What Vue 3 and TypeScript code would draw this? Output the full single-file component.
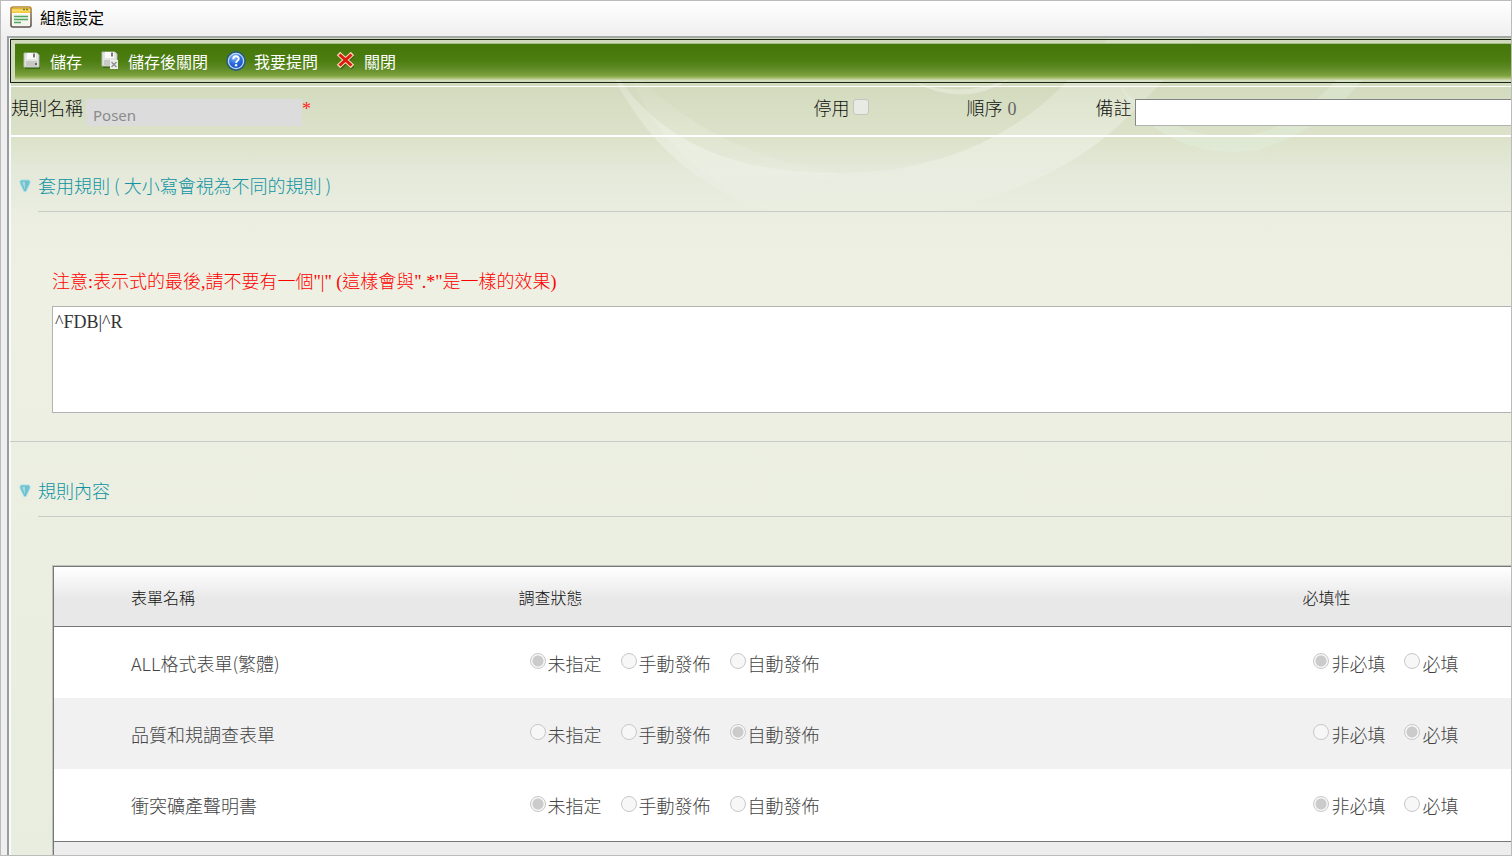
<script setup lang="ts">
import { ref } from 'vue'

interface FormRow {
  name: string
  status: string
  required: string
}

const statusOptions = ['未指定', '手動發佈', '自動發佈']
const requiredOptions = ['非必填', '必填']

const ruleName = ref('Posen')
const disabledFlag = ref(false)
const remark = ref('')
const expression = ref('^FDB|^R')

const rows = ref<FormRow[]>([
  { name: 'ALL格式表單(繁體)', status: '未指定', required: '非必填' },
  { name: '品質和規調查表單', status: '自動發佈', required: '必填' },
  { name: '衝突礦產聲明書', status: '未指定', required: '非必填' },
])
</script>

<template>
  <div class="window">
    <header class="titlebar">
      <svg class="title-icon" viewBox="0 0 22 22" aria-hidden="true">
        <defs>
          <linearGradient id="iconTop" x1="0" y1="0" x2="0" y2="1">
            <stop offset="0" stop-color="#d9a520" />
            <stop offset="0.4" stop-color="#fbe27a" />
            <stop offset="1" stop-color="#f3c331" />
          </linearGradient>
          <linearGradient id="iconFrame" x1="0" y1="0" x2="0" y2="1">
            <stop offset="0" stop-color="#b98a2c" />
            <stop offset="0.4" stop-color="#8a6d58" />
            <stop offset="1" stop-color="#5d524c" />
          </linearGradient>
        </defs>
        <rect x="1" y="1" width="20" height="20" rx="2" fill="#fff" stroke="url(#iconFrame)" stroke-width="1.6" />
        <rect x="2" y="2" width="18" height="5" fill="url(#iconTop)" />
        <path d="M13 3.5h2M16 3.5h2" stroke="#6f7d24" stroke-width="1.4" />
        <rect x="2.5" y="8" width="17" height="12" fill="#f1f5ee" />
        <path d="M4 10.5h14M4 13.5h14M4 16.5h7" stroke="#55a860" stroke-width="1.5" />
      </svg>
      <h1>組態設定</h1>
    </header>

    <main class="frame">
      <svg class="swoosh" viewBox="0 0 1503 220" aria-hidden="true">
        <defs>
          <linearGradient id="bandFade" gradientUnits="userSpaceOnUse" x1="0" y1="0" x2="0" y2="180">
            <stop offset="0" stop-color="#fff" stop-opacity=".12" />
            <stop offset=".6" stop-color="#fff" stop-opacity=".3" />
            <stop offset="1" stop-color="#fff" stop-opacity="0" />
          </linearGradient>
          <linearGradient id="leftFade" gradientUnits="userSpaceOnUse" x1="0" y1="20" x2="0" y2="170">
            <stop offset="0" stop-color="#fff" stop-opacity="0" />
            <stop offset=".5" stop-color="#fff" stop-opacity=".14" />
            <stop offset="1" stop-color="#fff" stop-opacity="0" />
          </linearGradient>
        </defs>
        <path d="M596 20C640 90 700 135 830 135C935 135 1010 95 1062 40L1100 0H1195C1150 45 1110 100 1050 130C990 165 900 185 800 180C700 170 630 100 596 20Z" fill="url(#bandFade)" />
        <path d="M620 30C680 90 740 120 830 135L760 170C690 140 640 95 620 30Z" fill="url(#leftFade)" />
        <path d="M1110 45C1150 95 1220 110 1265 90C1300 72 1325 50 1345 20H1371C1340 65 1300 98 1250 112C1200 120 1140 105 1110 45Z" fill="#e6f5e4" opacity=".3" />
        <path d="M905 44Q950 60 1000 42Q955 70 905 44Z" fill="#fff" opacity=".3" />
      </svg>

      <div class="toolbar-wrap">
        <nav class="toolbar" aria-label="工具列">
          <button type="button" class="save">
            <svg viewBox="0 0 20 20" aria-hidden="true">
              <path d="M3 4h13l2 2v12H3Z" fill="#254b0b" opacity=".5" />
              <path d="M2 2h13l2 2v12H2Z" fill="#e3e5e0" stroke="#b9bdb4" />
              <path d="M5 2h9v6H5Z" fill="#fafafa" /><path d="M11 2.500h2v4h-2Z" fill="#767c73" />
              <path d="M4 10h11v5H4Z" fill="#c7c9c5" /><path d="M13 12h2v2h-2Z" fill="#636961" />
            </svg>
            <span>儲存</span>
          </button>
          <button type="button" class="save-close">
            <svg viewBox="0 0 20 20" aria-hidden="true">
              <path d="M3 3h13l2 2v12H3Z" fill="#254b0b" opacity=".5" />
              <path d="M2 1h13l2 2v12H2Z" fill="#e3e5e0" stroke="#b9bdb4" />
              <path d="M5 1h9v6H5Z" fill="#fafafa" /><path d="M11 1.500h2v4h-2Z" fill="#767c73" />
              <path d="M4 9h6v5H4Z" fill="#c7c9c5" />
              <path d="M10 9h8v9h-8Z" fill="#eceeeb" /><path d="m11.500 11 5 5m0-5-5 5" stroke="#8b908a" stroke-width="1.400" />
            </svg>
            <span>儲存後關閉</span>
          </button>
          <button type="button" class="ask">
            <svg viewBox="0 0 20 20" aria-hidden="true">
              <defs>
                <radialGradient id="helpFill" cx=".4" cy=".25" r=".85">
                  <stop offset="0" stop-color="#8fc0fa" />
                  <stop offset=".5" stop-color="#2a6ee0" />
                  <stop offset="1" stop-color="#0e41b4" />
                </radialGradient>
              </defs>
              <circle cx="10" cy="10" r="9.900" fill="#285f78" />
              <circle cx="10" cy="10" r="7.600" fill="url(#helpFill)" stroke="#c3d8fa" stroke-width="1.300" />
              <path d="M7.300 8.200C7.300 4.300 13 4.500 12.700 7.900C12.500 9.700 10.100 9.700 10.100 12" fill="none" stroke="#fff" stroke-width="1.900" />
              <circle cx="10.100" cy="14.300" r="1.200" fill="#fff" />
            </svg>
            <span>我要提問</span>
          </button>
          <button type="button" class="close">
            <svg viewBox="0 0 20 20" aria-hidden="true">
              <path d="m4 4 13 13m0-13L4 17" stroke="#263c08" stroke-width="4" opacity=".5" />
              <path d="m2.500 2.500 14 13m0-13-14 13" stroke="#f9d9b4" stroke-width="5" />
              <path d="m3.500 3.500 12 11m0-11-12 11" stroke="#dc1a10" stroke-width="3" />
            </svg>
            <span>關閉</span>
          </button>
        </nav>
      </div>

      <form class="basics" @submit.prevent>
        <div class="field name-field">
          <label for="rule-name">規則名稱</label>
          <input id="rule-name" v-model="ruleName" type="text" disabled />
          <span class="star">*</span>
        </div>
        <div class="field stop-field">
          <label for="stop">停用</label>
          <input id="stop" v-model="disabledFlag" type="checkbox" disabled />
        </div>
        <div class="field order-field">
          <span>順序</span>
          <span class="order-value">0</span>
        </div>
        <div class="field remark-field">
          <label for="remark">備註</label>
          <input id="remark" v-model="remark" type="text" />
        </div>
      </form>

      <section class="expression">
        <h2>
          <svg viewBox="0 0 12 14" aria-hidden="true">
            <path d="M1 2 2 1h8l1 1v2L7 12.500H5L1 4Z" fill="#6cc3d0" stroke="#a9dde3" />
            <path d="M3 3h6L6 10.500Z" fill="#a5dbe3" />
            <path d="M6 3h3L6 11Z" fill="#57aebd" opacity=".6" />
          </svg>
          套用規則 ( 大小寫會視為不同的規則 )
        </h2>
        <div class="expression-body">
          <label for="expression">注意:表示式的最後,請不要有一個"|" (這樣會與".*"是一樣的效果)</label>
          <textarea id="expression" v-model="expression" spellcheck="false"></textarea>
        </div>
      </section>

      <section class="content">
        <h2>
          <svg viewBox="0 0 12 14" aria-hidden="true">
            <path d="M1 2 2 1h8l1 1v2L7 12.500H5L1 4Z" fill="#6cc3d0" stroke="#a9dde3" />
            <path d="M3 3h6L6 10.500Z" fill="#a5dbe3" />
            <path d="M6 3h3L6 11Z" fill="#57aebd" opacity=".6" />
          </svg>
          規則內容
        </h2>
        <div class="table-wrap">
          <table>
            <thead>
              <tr>
                <th scope="col" class="col-name">表單名稱</th>
                <th scope="col" class="col-status">調查狀態</th>
                <th scope="col">必填性</th>
              </tr>
            </thead>
            <tbody>
              <tr v-for="(row, i) in rows" :key="row.name">
                <td>{{ row.name }}</td>
                <td class="choices">
                  <div class="options">
                    <label v-for="option in statusOptions" :key="option">
                      <input v-model="row.status" type="radio" :name="`status-${i}`" :value="option" disabled />
                      <span>{{ option }}</span>
                    </label>
                  </div>
                </td>
                <td class="choices">
                  <div class="options">
                    <label v-for="option in requiredOptions" :key="option">
                      <input v-model="row.required" type="radio" :name="`required-${i}`" :value="option" disabled />
                      <span>{{ option }}</span>
                    </label>
                  </div>
                </td>
              </tr>
            </tbody>
          </table>
          <div class="table-foot"></div>
        </div>
      </section>
    </main>
  </div>
</template>

<style>
html,
body {
  height: 100%;
}
#app {
  height: 100%;
}
</style>

<style scoped>
* {
  box-sizing: border-box;
}
.window {
  display: flex;
  flex-direction: column;
  height: 100%;
  overflow: hidden;
  padding-left: 6px;
  border: 1px solid #bbb;
  background: linear-gradient(#fff, #efefef 36px);
  font-family: 'Liberation Serif', 'Noto Sans CJK TC', serif;
  font-size: 18px;
  font-weight: 300;
  color: #111;
}
.titlebar {
  display: flex;
  flex: none;
  align-items: center;
  gap: 8px;
  height: 35px;
  padding: 0 3px 4px;
}
.title-icon {
  width: 22px;
  height: 22px;
}
h1 {
  margin: 0;
  font: 400 16px/24px 'Noto Sans CJK TC', sans-serif;
  color: #000;
}
.frame {
  position: relative;
  flex: 1;
  min-height: 0;
  overflow: hidden;
  padding-top: 1px;
  border-top: 2px solid #a3a7a5;
  border-left: 2px solid #999c9f;
  background: linear-gradient(#d0d9bb, #d3dbbf 50px, #dde3cb 104px, #e4e9da 134px, #ebeee1 180px, #edf0e2 240px, #e9eddf 800px);
  box-shadow: inset 2px 0 #f8fbfb;
}
.swoosh {
  position: absolute;
  top: 0;
  left: 0;
  width: 100%;
}
.toolbar-wrap {
  position: relative;
  margin-left: 1px;
  padding: 3px 0 2px 4px;
  border: 1px solid #17220f;
  border-right: 0;
}
.toolbar {
  display: flex;
  align-items: center;
  gap: 18px;
  height: 37px;
  padding: 0 0 2px 7px;
  border-top: 1px solid #a9bd8a;
  background: linear-gradient(#44760a, #4b7d10 45%, #5f8b26 68%, #7ea23e 88%, #b4c782 97%, #d3dbbf);
}
.toolbar button {
  display: flex;
  align-items: center;
  gap: 8px;
  padding: 0;
  border: 0;
  background: none;
  color: #fff;
  font: 400 16px/24px 'Noto Sans CJK TC', sans-serif;
}
.toolbar svg {
  width: 20px;
  height: 20px;
}
.basics {
  position: relative;
  display: flex;
  height: 51px;
  margin: 3px 0 0 2px;
  border-top: 1px solid #fff;
  border-bottom: 2px solid #fff;
}
.field {
  display: flex;
  flex: none;
  align-items: flex-start;
  padding-top: 9px;
  line-height: 26px;
}
.name-field {
  width: 53.5%;
}
.stop-field {
  width: 10.2%;
}
.order-field {
  gap: 5px;
  width: 8.6%;
}
.order-value {
  color: #666;
}
.remark-field {
  flex: 1;
}
.field input[type='text'] {
  height: 27px;
  margin-top: 3px;
  font: 400 15px/24px 'Noto Sans', sans-serif;
}
.name-field input[type='text'] {
  width: 216px;
  margin-left: 3px;
  padding: 4px 7px 0;
  border: 0;
  background: #dcdcdc;
  color: #8b8b8b;
}
.star {
  color: #f22;
}
.remark-field input[type='text'] {
  flex: 1;
  min-width: 0;
  margin-left: 3px;
  border: 1px solid #b0b3b0;
  border-top-color: #858585;
  border-left-color: #858585;
  border-right: 0;
  background: #fff;
}
input[type='checkbox'] {
  appearance: none;
  width: 16px;
  height: 16px;
  margin: 3px 0 0 3px;
  border: 1px solid #c2c6be;
  border-radius: 3px;
  background: #e8ebe3;
}
section {
  position: relative;
  margin-left: 1px;
}
.expression {
  padding-top: 32px;
  padding-bottom: 28px;
  border-bottom: 1px solid #c8ccc6;
}
.content {
  padding-top: 32px;
}
h2 {
  display: flex;
  align-items: center;
  height: 43px;
  margin: 0 0 0 28px;
  padding-bottom: 10px;
  border-bottom: 1px solid #c8ccc6;
  font: 300 18px/32px 'Noto Sans CJK TC', sans-serif;
  color: #0f93a3;
}
h2 svg {
  flex: none;
  width: 12px;
  height: 14px;
  margin: 2px 7px 0 -19px;
}
.expression-body {
  padding: 56px 0 0 42px;
}
.expression-body label {
  display: block;
  height: 38px;
  line-height: 28px;
  color: #f00;
}
textarea {
  display: block;
  width: 100%;
  height: 107px;
  margin: 0;
  padding: 4px 2px;
  border: 1px solid #b0b3b0;
  border-right: 0;
  outline: 0;
  resize: none;
  background: #fff;
  color: #333;
  font: 400 18px/22px 'Liberation Serif', 'Noto Sans CJK TC', serif;
}
.table-wrap {
  margin: 48px 0 0 42px;
  border-top: 1px solid #c0c3bb;
  border-left: 1px solid #c0c3bb;
}
table {
  width: 100%;
  table-layout: fixed;
  border-collapse: separate;
  border-spacing: 0;
  border: 1px solid #777;
  border-right: 0;
  background: #fff;
  font-family: 'Noto Sans CJK TC', sans-serif;
}
th {
  height: 60px;
  padding: 0 0 0 77px;
  border-bottom: 1px solid #777;
  background: linear-gradient(#fff, #e8e8e8 55%, #e8e8e8);
  font-size: 16px;
  font-weight: 300;
  text-align: left;
  color: #111;
}
.col-name {
  width: 26.6%;
}
.col-status {
  width: 53.8%;
}
td {
  height: 71px;
  padding: 0 0 0 77px;
  color: #444;
}
tbody tr:last-child td {
  height: 72px;
}
tbody tr:nth-child(even) td {
  background: #f1f1f1;
}
.choices {
  padding-left: 88px;
}
.options {
  display: flex;
  gap: 19px;
}
.options label {
  display: flex;
  align-items: center;
  gap: 2px;
  white-space: nowrap;
}
input[type='radio'] {
  appearance: none;
  width: 16px;
  height: 16px;
  margin: 0 0 3px;
  border: 1px solid #c8c8c8;
  border-radius: 50%;
  background: #f7f7f7;
}
input[type='radio']:checked {
  background: radial-gradient(circle, #cbcbcb 5px, #f7f7f7 6px);
}
.table-foot {
  height: 40px;
  border-left: 1px solid #777;
  background: #ededed;
}
</style>
